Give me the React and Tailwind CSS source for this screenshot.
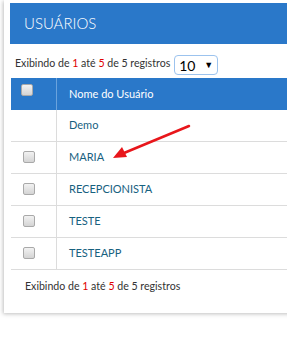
import React from 'react'

const rows = [
  { name: 'Demo', check: false },
  { name: 'MARIA', check: true },
  { name: 'RECEPCIONISTA', check: true },
  { name: 'TESTE', check: true },
  { name: 'TESTEAPP', check: true },
]

function Box() {
  return (
    <span className="block w-[12px] h-[12px] rounded-[2px] border border-[#a9a9a9] bg-gradient-to-b from-[#f2f2f2] to-[#d4d4d4]" />
  )
}

function Info() {
  return (
    <span>
      Exibindo de <span className="text-[#e00000]">1</span> até <span className="text-[#e00000]">5</span> de 5 registros
    </span>
  )
}

export default function App() {
  return (
    <div className="relative w-[287px] h-[351px] overflow-hidden bg-white font-['Lato','Open_Sans',sans-serif]">
      <div className="ml-[4px] w-[320px] pt-[3px] pl-[6px] pb-[18px] bg-white shadow-[-1px_1px_4px_rgba(0,0,0,0.25)]">
        <div className="h-[41px] bg-[#2a78c9] flex items-center pl-[14px] text-white text-[15px] font-light">
          USUÁRIOS
        </div>
        <div className="h-[34px] flex items-end pb-[3px] pl-[5px] gap-[4px] text-[10.6px] text-[#333]">
          <span className="pb-[3px]"><Info /></span>
          <div className="w-[44px] h-[20px] border border-[#9cc3ee] rounded-[4px] flex items-center justify-between px-[4px] text-[14px] text-black">
            <span>10</span>
            <span className="text-[9px]">▼</span>
          </div>
        </div>
        <div className="ml-[1px]">
          <div className="h-[32px] bg-[#2a78c9] flex">
            <div className="w-[46px] border-r border-[#6aa3dd] pl-[10px] pt-[6px]">
              <Box />
            </div>
            <div className="flex items-center pl-[12px] pt-[1px] text-white text-[11px]">Nome do Usuário</div>
          </div>
          {rows.map((r) => (
            <div key={r.name} className="h-[32px] flex border-b border-[#dcdcdc]">
              <div className="w-[46px] border-r border-[#dcdcdc] pl-[12px] flex items-center pb-[2px]">
                {r.check && <Box />}
              </div>
              <div className="flex items-center pl-[12px] text-[11px] text-[#17617f]">{r.name}</div>
            </div>
          ))}
          <div className="pl-[14px] pt-[9px] text-[10.6px] text-[#333]">
            <Info />
          </div>
        </div>
      </div>
      <svg className="absolute left-0 top-0" width="287" height="351">
        <line x1="189" y1="126" x2="124" y2="153" stroke="#e8161b" strokeWidth="2.5" strokeLinecap="round" />
        <polygon points="113,158 122,147 127,157" fill="#e8161b" />
      </svg>
    </div>
  )
}
